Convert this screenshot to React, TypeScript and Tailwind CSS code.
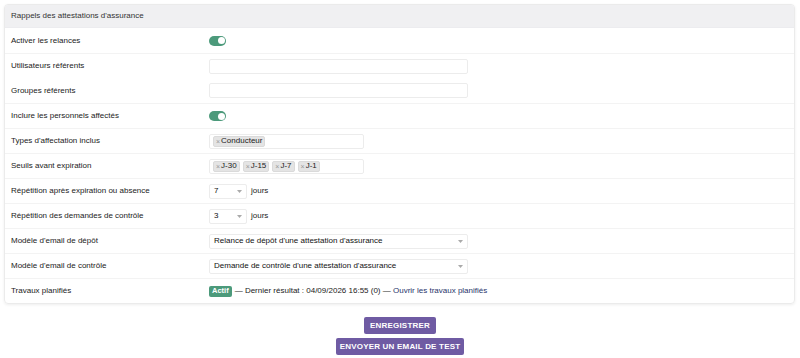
import React from 'react';

const Toggle: React.FC = () => (
    <div className="w-[17px] h-[10px] rounded-full bg-[#4c9a7b] flex items-center justify-end px-[1.5px]">
        <div className="w-[7px] h-[7px] rounded-full bg-white" />
    </div>
);

const Tag: React.FC<{ label: string }> = ({ label }) => (
    <span className="flex items-center h-[11px] px-[2px] rounded-[2px] bg-[#e4e4e4] border border-[#dadada] text-[8px] text-[#222] leading-none">
        <span className="text-[#999] mr-[1px] text-[7px]">×</span>
        {label}
    </span>
);

const Caret: React.FC = () => (
    <svg width="5" height="3" viewBox="0 0 5 3" className="shrink-0">
        <path d="M0 0 L5 0 L2.5 3 Z" fill="#aaa" />
    </svg>
);

const Select: React.FC<{ value: string; wide?: boolean }> = ({ value, wide }) => (
    <div
        className={
            wide
                ? 'w-[259px] h-[15px] border border-[#ececec] rounded-[2px] flex items-center justify-between pl-[4px] pr-[4px] text-[8px] text-[#111]'
                : 'w-[38px] h-[15px] border border-[#ececec] rounded-[2px] flex items-center justify-between pl-[4px] pr-[4px] text-[8px] text-[#111]'
        }
    >
        <span>{value}</span>
        <Caret />
    </div>
);

const Row: React.FC<{ label: string; children?: React.ReactNode; border?: boolean }> = ({ label, children, border = true }) => (
    <div className={border ? 'h-[25px] flex items-center border-t border-[#f3f3f3]' : 'h-[25px] flex items-center'}>
        <div className="w-[204px] pl-[6px] text-[8px] text-[#222]">{label}</div>
        <div className="flex items-center gap-[4px]">{children}</div>
    </div>
);

export default function App() {
    return (
        <div className="w-[800px] h-[358px] bg-white font-['Liberation_Sans',Arial,sans-serif] pt-[4px]">
            <div className="mx-[4px] w-[791px] rounded-[4px] border border-[#ebebeb] shadow-[0_1px_3px_rgba(0,0,0,0.07)] overflow-hidden">
                <div className="h-[23px] bg-[#f0f0f2] px-[6px] flex items-center text-[8px] text-[#333] border-b border-[#ececef]">
                    Rappels des attestations d'assurance
                </div>
                <Row label="Activer les relances" border={false}>
                    <Toggle />
                </Row>
                <Row label="Utilisateurs référents">
                    <div className="w-[259px] h-[15px] border border-[#ececec] rounded-[2px]" />
                </Row>
                <Row label="Groupes référents" border={false}>
                    <div className="w-[259px] h-[15px] border border-[#ececec] rounded-[2px]" />
                </Row>
                <Row label="Inclure les personnels affectés">
                    <Toggle />
                </Row>
                <Row label="Types d'affectation inclus">
                    <div className="w-[155px] h-[15px] border border-[#ececec] rounded-[2px] flex items-center px-[3px] gap-[3px]">
                        <Tag label="Conducteur" />
                    </div>
                </Row>
                <Row label="Seuils avant expiration">
                    <div className="w-[155px] h-[15px] border border-[#ececec] rounded-[2px] flex items-center px-[3px] gap-[3px]">
                        <Tag label="J-30" />
                        <Tag label="J-15" />
                        <Tag label="J-7" />
                        <Tag label="J-1" />
                    </div>
                </Row>
                <Row label="Répétition après expiration ou absence">
                    <Select value="7" />
                    <span className="text-[8px] text-[#222]">jours</span>
                </Row>
                <Row label="Répétition des demandes de contrôle">
                    <Select value="3" />
                    <span className="text-[8px] text-[#222]">jours</span>
                </Row>
                <Row label="Modèle d'email de dépôt">
                    <Select wide value="Relance de dépôt d'une attestation d'assurance" />
                </Row>
                <Row label="Modèle d'email de contrôle">
                    <Select wide value="Demande de contrôle d'une attestation d'assurance" />
                </Row>
                <Row label="Travaux planifiés">
                    <div className="flex items-center text-[8px] text-[#222] whitespace-pre">
                        <span className="h-[11px] px-[3px] mr-[3px] rounded-[2px] bg-[#4c9a7b] text-white font-bold text-[7.5px] flex items-center">
                            Actif
                        </span>
                        <span>— Dernier résultat : 04/09/2026 16:55 (0) — </span>
                        <a className="text-[#28346a]">Ouvrir les travaux planifiés</a>
                    </div>
                </Row>
            </div>
            <div className="flex flex-col items-center gap-[4px] mt-[13px]">
                <button className="h-[17px] w-[72px] rounded-[2px] bg-[#6f5ba3] text-white font-bold text-[8px] tracking-[0.2px]">
                    ENREGISTRER
                </button>
                <button className="h-[17px] w-[128px] rounded-[2px] bg-[#6f5ba3] text-white font-bold text-[8px] tracking-[0.2px]">
                    ENVOYER UN EMAIL DE TEST
                </button>
            </div>
        </div>
    );
}
